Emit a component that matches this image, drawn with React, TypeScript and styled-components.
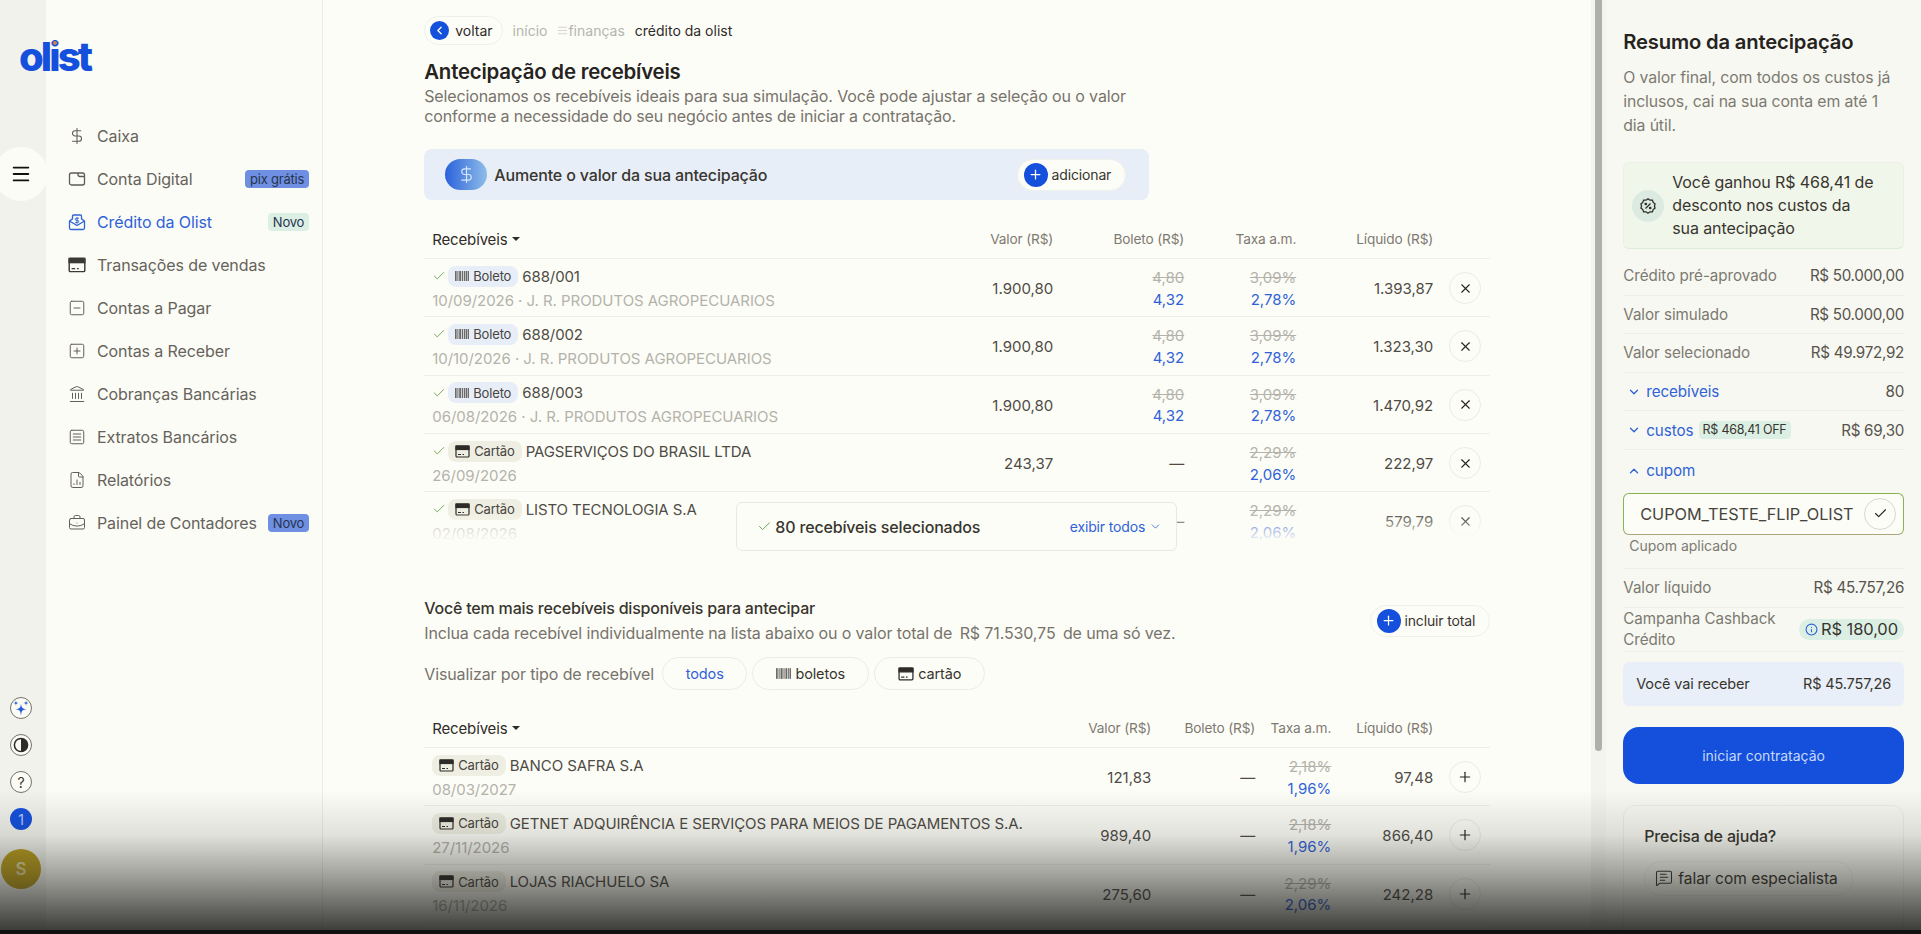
import { ReactNode } from 'react';
import styled, { createGlobalStyle } from 'styled-components';
import {
  AlignJustify, BriefcaseBusiness, Check, ChevronDown, ChevronLeft, ChevronUp, DollarSign,
  FileChartColumn, Info, Landmark, Menu, MessageSquareText, Plus, SquareMenu, SquareMinus, SquarePlus, X,
} from 'lucide-react';

const GlobalStyle = createGlobalStyle`
  html, body { margin: 0; height: 100%; overflow: hidden; background: #fdfdf7; }
  body { font-family: Inter, "Open Sans", "Liberation Sans", sans-serif; color: #3d3a36; }
  * { box-sizing: border-box; }
`;

const Page = styled.div`
  position: relative;
  display: flex;
  width: 1921px;
  height: 934px;
  overflow: hidden;
`;

const BottomShade = styled.div`
  position: absolute;
  left: 0;
  right: 0;
  bottom: 0;
  height: 144px;
  z-index: 20;
  pointer-events: none;
  border-bottom: 4px solid #111;
  background: linear-gradient(to bottom, rgba(0,0,0,0) 0%, rgba(30,30,26,.12) 32%, rgba(30,30,26,.42) 62%, rgba(20,20,18,.82) 100%);
`;

/* left rail */
const Rail = styled.aside`
  position: relative;
  z-index: 3;
  flex: 0 0 46px;
  min-width: 0;
  display: flex;
  flex-direction: column;
  align-items: center;
  padding: 33px 0 45px;
  background: #f2f2ec;
`;

const Logo = styled.div`
  align-self: flex-start;
  margin-left: 19px;
  height: 48px;
  font-size: 40px;
  line-height: 48px;
  font-weight: 800;
  letter-spacing: -2.9px;
  color: #1550dc;
  white-space: nowrap;
`;

const LogoI = styled.span`
  position: relative;
  &::after {
    content: '';
    position: absolute;
    top: 9px;
    left: 4px;
    width: 4px;
    height: 4px;
    border-radius: 50%;
    background: #d9803f;
  }
`;

const MenuCircle = styled.div`
  flex: none;
  align-self: flex-start;
  width: 54px;
  height: 54px;
  margin: 66px 0 0 -6px;
  border-radius: 50%;
  background: #fcfcf6;
  display: flex;
  align-items: center;
  justify-content: center;
  color: #111;
`;

const RailIcons = styled.div`
  margin-top: auto;
  padding-right: 4px;
  display: flex;
  flex-direction: column;
  align-items: center;
  gap: 15px;
`;

const RailRound = styled.div<{ $fill?: string }>`
  width: 22px;
  height: 22px;
  border-radius: 50%;
  border: ${p => (p.$fill ? '0' : '1px solid #77736c')};
  background: ${p => p.$fill || '#fcfcf6'};
  color: ${p => (p.$fill ? '#b9cdf8' : '#38352f')};
  font-size: 14px;
  display: flex;
  align-items: center;
  justify-content: center;
`;

const Avatar = styled.div`
  flex: none;
  width: 40px;
  height: 40px;
  margin-top: 4px;
  border-radius: 50%;
  background: #b89d1e;
  color: #dcd49a;
  font-size: 17px;
  font-weight: 600;
  display: flex;
  align-items: center;
  justify-content: center;
`;

/* sidebar */
const Sidebar = styled.nav`
  flex: 0 0 276px;
  padding: 114px 13px 0 22px;
  background: #fcfcf6;
  border-right: 1px solid #ecece6;
`;

const NavItem = styled.div<{ $active?: boolean }>`
  display: flex;
  align-items: center;
  height: 43.1px;
  gap: 11px;
  font-size: 16px;
  letter-spacing: -0.1px;
  white-space: nowrap;
  color: ${p => (p.$active ? '#2f62d8' : '#66635c')};
  svg { flex: none; color: ${p => (p.$active ? '#2f62d8' : '#5f5b54')}; }
`;

const NavBadge = styled.span<{ $tone: 'blue' | 'green' }>`
  margin-left: auto;
  padding: 0 5px;
  height: 18px;
  line-height: 18px;
  border-radius: 4px;
  font-size: 13px;
  letter-spacing: -0.2px;
  color: #27354f;
  background: ${p => (p.$tone === 'blue' ? '#6e8fe2' : '#dcefe4')};
`;

/* main column */
const Main = styled.main`
  flex: 0 0 1268px;
  padding: 16px 101px 0 101px;
  background: #fdfdf7;
`;

const Crumbs = styled.div`
  display: flex;
  align-items: center;
  height: 29px;
  font-size: 14px;
  color: #b5b5ae;
`;

const BackPill = styled.div`
  display: flex;
  align-items: center;
  gap: 6px;
  height: 29px;
  padding: 0 9px 0 5px;
  margin-right: 10px;
  border: 1px solid #f0f0ea;
  border-radius: 15px;
  color: #2e2b28;
`;

const Dot = styled.span<{ $size: number }>`
  flex: none;
  width: ${p => p.$size}px;
  height: ${p => p.$size}px;
  border-radius: 50%;
  background: #1550dc;
  color: #fff;
  display: flex;
  align-items: center;
  justify-content: center;
`;

const Crumb = styled.span<{ $current?: boolean }>`
  display: flex;
  align-items: center;
  margin-right: 10px;
  color: ${p => (p.$current ? '#2e2b28' : '#b5b5ae')};
`;

const Title = styled.h1`
  margin: 13px 0 1px;
  font-size: 20.4px;
  line-height: 28px;
  font-weight: 600;
  letter-spacing: -0.2px;
  color: #26231f;
`;

const Lead = styled.p`
  margin: 0;
  width: 720px;
  font-size: 16px;
  line-height: 19.5px;
  letter-spacing: -0.12px;
  color: #77736c;
`;

const Banner = styled.div`
  display: flex;
  align-items: center;
  height: 51px;
  width: 725px;
  margin-top: 23px;
  padding: 0 23px 0 21px;
  border-radius: 8px;
  background: #e8eef8;
  font-size: 16px;
  font-weight: 500;
  letter-spacing: -0.15px;
  color: #38352f;
`;

const BannerCoin = styled.span`
  width: 42px;
  height: 31px;
  margin-right: 7px;
  border-radius: 16px;
  background: linear-gradient(90deg, #2a62dc, #8fbde8);
  color: #d8e6fb;
  display: flex;
  align-items: center;
  justify-content: center;
`;

const AddPill = styled.div`
  margin-left: auto;
  display: flex;
  align-items: center;
  gap: 4px;
  height: 32px;
  padding: 0 14px 0 6px;
  border: 1px solid #f1f1eb;
  border-radius: 16px;
  background: #fdfdf8;
  font-size: 14px;
  font-weight: 400;
  letter-spacing: -0.15px;
  color: #38352f;
`;

/* tables */
const ListFrame = styled.div`
  position: relative;
  margin-top: 20px;
`;

const ListClip = styled.div`
  position: relative;
  height: 322px;
  margin-bottom: -8px;
  overflow: hidden;
  &::after {
    content: '';
    position: absolute;
    left: 0;
    right: 0;
    bottom: 0;
    height: 30px;
    background: linear-gradient(to bottom, rgba(253,253,247,0), #fdfdf7 100%);
  }
`;

const FloatCard = styled.div`
  position: absolute;
  top: 282px;
  left: 312px;
  z-index: 2;
  width: 441px;
  height: 49px;
  display: flex;
  align-items: center;
  padding: 0 14px 0 20px;
  border: 1px solid #e9e9e3;
  border-radius: 6px;
  background: #fcfdf7;
  font-size: 16px;
  font-weight: 500;
  letter-spacing: -0.15px;
  color: #38352f;
  gap: 3px;
  svg { flex: none; }
`;

const ShowAll = styled.span`
  margin-left: auto;
  display: flex;
  align-items: center;
  gap: 4px;
  font-size: 14px;
  font-weight: 400;
  color: #2f62d8;
`;

const Grid = styled.div<{ $cols: string; $head?: boolean }>`
  display: grid;
  grid-template-columns: ${p => p.$cols};
  align-items: center;
  height: ${p => (p.$head ? '39px' : '58.3px')};
  padding-left: 8px;
  border-bottom: 1px solid #eeeee8;
  font-size: 15px;
  color: #4e4b45;
`;

const HeadCell = styled.div<{ $first?: boolean }>`
  justify-self: ${p => (p.$first ? 'start' : 'end')};
  white-space: nowrap;
  font-size: ${p => (p.$first ? '15px' : '13.7px')};
  color: ${p => (p.$first ? '#2e2b28' : '#7d7a72')};
  letter-spacing: -0.15px;
  display: flex;
  align-items: center;
  gap: 5px;
`;

const SortArrow = styled.i`
  width: 0;
  height: 0;
  border-left: 4px solid transparent;
  border-right: 4px solid transparent;
  border-top: 4px solid #2e2b28;
`;

const Who = styled.div`
  min-width: 0;
`;

const WhoTop = styled.div`
  display: flex;
  align-items: center;
  gap: 4px;
  height: 21px;
  margin-bottom: 5px;
  font-size: 15px;
  letter-spacing: -0.1px;
  color: #4e4b45;
  white-space: nowrap;
`;

const CheckMark = styled(Check)`
  flex: none;
  margin-right: -2px;
  color: #6fa34f;
`;

const Tag = styled.span<{ $kind: 'boleto' | 'cartao' }>`
  display: inline-flex;
  align-items: center;
  gap: 4px;
  height: 21px;
  padding: 0 7px;
  border-radius: 8px;
  font-size: 13px;
  letter-spacing: -0.15px;
  color: #47443e;
  background: ${p => (p.$kind === 'boleto' ? '#e8eef8' : '#eeeee2')};
`;

const WhoSub = styled.div`
  font-size: 15px;
  line-height: 18px;
  letter-spacing: -0.05px;
  color: #b3b3ab;
  white-space: nowrap;
`;

const Amount = styled.div`
  justify-self: end;
  padding-top: 2px;
  white-space: nowrap;
`;

const Rate = styled.div`
  justify-self: end;
  padding-top: 2px;
  text-align: right;
  line-height: 21.5px;
`;

const Old = styled.div`
  color: #b3b3ab;
  text-decoration: line-through;
`;

const New = styled.div`
  color: #2f62d8;
`;

const RoundAction = styled.div`
  justify-self: end;
  margin: 1px 9px 0 0;
  width: 32px;
  height: 32px;
  border: 1px solid #ecece6;
  border-radius: 50%;
  background: #fdfdf8;
  color: #26231f;
  display: flex;
  align-items: center;
  justify-content: center;
`;

const MoreHead = styled.div`
  display: flex;
  align-items: center;
  justify-content: space-between;
  margin-top: 63px;
`;

const MoreTitle = styled.div`
  font-size: 16px;
  line-height: 22px;
  font-weight: 500;
  letter-spacing: -0.2px;
  color: #38352f;
`;

const MoreLead = styled.div`
  margin-top: 3px;
  font-size: 16px;
  line-height: 22px;
  letter-spacing: -0.12px;
  color: #77736c;
`;

const MoreAmount = styled.span`
  margin: 0 3px;
`;

const FilterRow = styled.div`
  display: flex;
  align-items: center;
  gap: 5px;
  margin-top: 13px;
  font-size: 16px;
  letter-spacing: -0.12px;
  color: #77736c;
`;

const FilterLabel = styled.span`
  width: 233px;
`;

const FilterPill = styled.span<{ $active?: boolean; $w: number }>`
  display: flex;
  align-items: center;
  justify-content: center;
  gap: 4px;
  width: ${p => p.$w}px;
  height: 33px;
  border: 1px solid #ecece6;
  border-radius: 17px;
  font-size: 14.5px;
  color: ${p => (p.$active ? '#2f62d8' : '#38352f')};
`;

const TableGap = styled.div`
  height: 19px;
`;

/* summary column */
const Scrollbar = styled.div`
  flex: 0 0 15px;
  padding: 0 4px;
  background: #f4f4ee;
`;

const ScrollThumb = styled.div`
  width: 7px;
  height: 751px;
  border-radius: 0 0 4px 4px;
  background: #b0b0a8;
`;

const Summary = styled.aside`
  flex: 1;
  min-width: 0;
  padding: 28px 17px 0 17px;
  background: #f7f8f1;
`;

const SummaryTitle = styled.h2`
  margin: 0;
  font-size: 20.2px;
  line-height: 28px;
  font-weight: 600;
  letter-spacing: -0.15px;
  color: #26231f;
`;

const SummaryLead = styled.p`
  margin: 10px 0 0;
  padding-right: 8px;
  font-size: 15.8px;
  line-height: 24px;
  letter-spacing: -0.1px;
  color: #7d7a72;
`;

const Discount = styled.div`
  display: flex;
  align-items: center;
  gap: 8px;
  height: 87px;
  margin-top: 24px;
  padding: 0 8px;
  border: 1px solid #ecf0e4;
  border-bottom-color: #dcecd8;
  border-radius: 6px;
  background: #f1f6ea;
  font-size: 16px;
  line-height: 23px;
  letter-spacing: -0.1px;
  color: #38352f;
`;

const DiscountText = styled.span`
  width: 205px;
`;

const DiscountBadge = styled.span`
  flex: none;
  width: 32px;
  height: 32px;
  border-radius: 50%;
  background: #dcebe2;
  display: flex;
  align-items: center;
  justify-content: center;
`;

const SumRow = styled.div<{ $h?: number; $plain?: boolean }>`
  display: flex;
  align-items: center;
  justify-content: space-between;
  height: ${p => p.$h || 38.6}px;
  border-bottom: ${p => (p.$plain ? '0' : '1px solid #eeeee8')};
  font-size: 15.2px;
  letter-spacing: -0.05px;
  color: #7d7a72;
`;

const Rows = styled.div`
  margin-top: 8px;
`;

const SumValue = styled.span`
  color: #57544d;
  letter-spacing: -0.3px;
`;

const Toggle = styled.span`
  display: flex;
  align-items: center;
  gap: 5px;
  padding-left: 4px;
  color: #2f62d8;
  white-space: nowrap;
`;

const OffTag = styled.span`
  height: 18px;
  line-height: 18px;
  padding: 0 4px;
  margin-left: 0;
  border-radius: 4px;
  background: #dcefe4;
  font-size: 12.5px;
  letter-spacing: -0.25px;
  color: #38352f;
`;

const CouponBox = styled.div`
  display: flex;
  align-items: center;
  justify-content: space-between;
  height: 42px;
  margin-top: 1px;
  padding: 0 7px 0 16px;
  border: 1px solid #8ab34f;
  border-bottom-color: #a9a77c;
  border-radius: 6px;
  background: #fdfdf8;
  font-size: 16.3px;
  letter-spacing: -0.05px;
  white-space: nowrap;
  color: #47443e;
`;

const CouponCheck = styled.span`
  flex: none;
  width: 32px;
  height: 32px;
  border: 1px solid #d8d8d2;
  border-radius: 50%;
  display: flex;
  align-items: center;
  justify-content: center;
  color: #26231f;
`;

const CouponNote = styled.div`
  height: 34px;
  padding: 1px 0 0 6px;
  border-bottom: 1px solid #eeeee8;
  font-size: 14px;
  line-height: 20px;
  color: #7d7a72;
`;

const Cashback = styled.span`
  display: flex;
  align-items: center;
  gap: 3px;
  height: 21px;
  padding: 0 6px;
  border-radius: 11px;
  background: #dcefe4;
  font-size: 16.5px;
  letter-spacing: -0.1px;
  color: #38352f;
  white-space: nowrap;
`;

const CampaignLabel = styled.span`
  width: 170px;
  line-height: 21px;
`;

const Receive = styled.div`
  display: flex;
  align-items: center;
  justify-content: space-between;
  height: 44px;
  margin-top: 10px;
  padding: 0 13px;
  border-radius: 6px;
  background: #e9eff8;
  font-size: 14.5px;
  letter-spacing: -0.15px;
  color: #38352f;
`;

const StartButton = styled.div`
  display: flex;
  align-items: center;
  justify-content: center;
  height: 57px;
  margin-top: 21px;
  border-radius: 16px;
  background: #1450dc;
  color: #c7d8f8;
  font-size: 14px;
`;

const Help = styled.div`
  height: 140px;
  margin-top: 21px;
  padding: 20px 20px;
  border: 1px solid #ecece6;
  border-radius: 12px;
`;

const HelpTitle = styled.div`
  font-size: 16px;
  line-height: 20px;
  font-weight: 500;
  letter-spacing: -0.15px;
  color: #38352f;
`;

const HelpPill = styled.div`
  display: inline-flex;
  align-items: center;
  gap: 5px;
  height: 35px;
  margin-top: 15px;
  padding: 0 14px 0 10px;
  border: 1px solid #ecece6;
  border-radius: 18px;
  font-size: 15.5px;
  letter-spacing: 0;
  color: #38352f;
  white-space: nowrap;
`;

const WalletIcon = () => (
  <svg width="18" height="18" viewBox="0 0 18 18" fill="none" stroke="currentColor" strokeWidth="1.3">
    <rect x="1.5" y="3" width="15" height="12" rx="2" />
    <path d="M10 3 v1.5 a2 2 0 0 0 2 2 h4.5" />
  </svg>
);

const CreditIcon = () => (
  <svg width="18" height="18" viewBox="0 0 18 18" fill="none" stroke="currentColor" strokeWidth="1.3">
    <path d="M1.5 8 L4.5 5.8 V3 a1 1 0 0 1 1-1 h7 a1 1 0 0 1 1 1 v2.8 L16.5 8 v7 a1.5 1.5 0 0 1-1.5 1.5 H3 A1.5 1.5 0 0 1 1.5 15 Z" />
    <path d="M1.5 8 L9 12.5 L16.5 8" />
    <path d="M10.8 5.2 H8.4 a1 1 0 0 0 0 2.2 h1.2 a1 1 0 0 1 0 2.2 H7.2 M9 4.2 v6.4" strokeWidth="1" />
  </svg>
);

const BarcodeIcon = ({ size = 14 }: { size?: number }) => (
  <svg width={size} height={size} viewBox="0 0 14 14" fill="#6b6a66">
    <rect x="0" y="2" width="1.6" height="10" />
    <rect x="2.4" y="2" width="1" height="10" />
    <rect x="4.2" y="2" width="2" height="10" />
    <rect x="7" y="2" width="1" height="10" />
    <rect x="8.8" y="2" width="1.6" height="10" />
    <rect x="11" y="2" width="1" height="10" />
    <rect x="12.6" y="2" width="1.4" height="10" />
  </svg>
);

const CardIcon = ({ size = 15, color = '#2e2b28' }: { size?: number; color?: string }) => (
  <svg width={size} height={size} viewBox="0 0 15 15" fill="none" stroke={color} strokeWidth="1.2">
    <rect x="1" y="2" width="13" height="11" rx="1" />
    <rect x="1" y="2" width="13" height="3.5" fill={color} />
    <path d="M3 10.5 h3 M7.5 10.5 h1.5" />
  </svg>
);

const SparkIcon = () => (
  <svg width="18" height="18" viewBox="0 0 16 16" fill="#2a5bd7">
    <path d="M8 4 C8.5 8 9 8.5 13 9 C9 9.5 8.5 10 8 15 C7.5 10 7 9.5 3 9 C7 8.5 7.5 8 8 4 Z" />
    <path d="M3.5 1 C3.7 3 4 3.3 6 3.5 C4 3.7 3.7 4 3.5 6 C3.3 4 3 3.7 1 3.5 C3 3.3 3.3 3 3.5 1 Z" />
    <path d="M12.5 1 C12.7 3 13 3.3 15 3.5 C13 3.7 12.7 4 12.5 6 C12.3 4 12 3.7 10 3.5 C12 3.3 12.3 3 12.5 1 Z" />
  </svg>
);

const ContrastIcon = () => (
  <svg width="16" height="16" viewBox="0 0 16 16">
    <circle cx="8" cy="8" r="6.6" fill="none" stroke="#2e2b28" strokeWidth="1.5" />
    <path d="M8 1.4 a6.6 6.6 0 0 1 0 13.2 Z" fill="#2e2b28" />
  </svg>
);

const PercentBadgeIcon = () => (
  <svg width="18" height="18" viewBox="0 0 18 18" fill="none" stroke="#2e2b28" strokeWidth="1.3">
    <path d="M9 1.8 l2 1.4 2.4-.1 .8 2.3 1.9 1.5 -.7 2.1 .7 2.1 -1.9 1.5 -.8 2.3 -2.4-.1 -2 1.4 -2-1.4 -2.4 .1 -.8-2.3 -1.9-1.5 .7-2.1 -.7-2.1 1.9-1.5 .8-2.3 2.4 .1 Z" />
    <path d="M6.5 11.5 l5-5" />
    <circle cx="6.8" cy="7" r=".7" />
    <circle cx="11.2" cy="11" r=".7" />
  </svg>
);

const navItems: { label: string; icon: ReactNode; badge?: string; tone?: 'blue' | 'green'; active?: boolean }[] = [
  { label: 'Caixa', icon: <DollarSign size={18} strokeWidth={1.4} /> },
  { label: 'Conta Digital', icon: <WalletIcon />, badge: 'pix grátis', tone: 'blue' },
  { label: 'Crédito da Olist', icon: <CreditIcon />, badge: 'Novo', tone: 'green', active: true },
  { label: 'Transações de vendas', icon: <CardIcon size={18} color="#3d3a36" /> },
  { label: 'Contas a Pagar', icon: <SquareMinus size={18} strokeWidth={1.3} /> },
  { label: 'Contas a Receber', icon: <SquarePlus size={18} strokeWidth={1.3} /> },
  { label: 'Cobranças Bancárias', icon: <Landmark size={18} strokeWidth={1.3} /> },
  { label: 'Extratos Bancários', icon: <SquareMenu size={18} strokeWidth={1.3} /> },
  { label: 'Relatórios', icon: <FileChartColumn size={18} strokeWidth={1.3} /> },
  { label: 'Painel de Contadores', icon: <BriefcaseBusiness size={18} strokeWidth={1.3} />, badge: 'Novo', tone: 'blue' },
];

type Row = {
  kind: 'boleto' | 'cartao';
  name: string;
  sub: string;
  value: string;
  fee?: [string, string];
  rate: [string, string];
  net: string;
};

const selected: Row[] = [
  { kind: 'boleto', name: '688/001', sub: '10/09/2026 · J. R. PRODUTOS AGROPECUARIOS', value: '1.900,80', fee: ['4,80', '4,32'], rate: ['3,09%', '2,78%'], net: '1.393,87' },
  { kind: 'boleto', name: '688/002', sub: '10/10/2026 · J. R. PRODUTOS AGROPECUARIOS', value: '1.900,80', fee: ['4,80', '4,32'], rate: ['3,09%', '2,78%'], net: '1.323,30' },
  { kind: 'boleto', name: '688/003', sub: '06/08/2026 · J. R. PRODUTOS AGROPECUARIOS', value: '1.900,80', fee: ['4,80', '4,32'], rate: ['3,09%', '2,78%'], net: '1.470,92' },
  { kind: 'cartao', name: 'PAGSERVIÇOS DO BRASIL LTDA', sub: '26/09/2026', value: '243,37', rate: ['2,29%', '2,06%'], net: '222,97' },
  { kind: 'cartao', name: 'LISTO TECNOLOGIA S.A', sub: '02/08/2026', value: '579,79', rate: ['2,29%', '2,06%'], net: '579,79' },
];

const available: Row[] = [
  { kind: 'cartao', name: 'BANCO SAFRA S.A', sub: '08/03/2027', value: '121,83', rate: ['2,18%', '1,96%'], net: '97,48' },
  { kind: 'cartao', name: 'GETNET ADQUIRÊNCIA E SERVIÇOS PARA MEIOS DE PAGAMENTOS S.A.', sub: '27/11/2026', value: '989,40', rate: ['2,18%', '1,96%'], net: '866,40' },
  { kind: 'cartao', name: 'LOJAS RIACHUELO SA', sub: '16/11/2026', value: '275,60', rate: ['2,29%', '2,06%'], net: '242,28' },
];

const selectedCols = '521px 100px 131px 112px 137px 57px';
const availableCols = '619px 100px 104px 76px 102px 57px';

const ReceivableTable = ({ rows, cols, added }: { rows: Row[]; cols: string; added?: boolean }) => (
  <>
    <Grid $cols={cols} $head>
      <HeadCell $first>Recebíveis <SortArrow /></HeadCell>
      <HeadCell>Valor (R$)</HeadCell>
      <HeadCell>Boleto (R$)</HeadCell>
      <HeadCell>Taxa a.m.</HeadCell>
      <HeadCell>Líquido (R$)</HeadCell>
    </Grid>
    {rows.map(row => (
      <Grid $cols={cols} key={row.name}>
        <Who>
          <WhoTop>
            {added && <CheckMark size={14} strokeWidth={1.6} />}
            <Tag $kind={row.kind}>
              {row.kind === 'boleto' ? <BarcodeIcon /> : <CardIcon />}
              {row.kind === 'boleto' ? 'Boleto' : 'Cartão'}
            </Tag>
            {row.name}
          </WhoTop>
          <WhoSub>{row.sub}</WhoSub>
        </Who>
        <Amount>{row.value}</Amount>
        {row.fee ? (
          <Rate><Old>{row.fee[0]}</Old><New>{row.fee[1]}</New></Rate>
        ) : (
          <Amount>—</Amount>
        )}
        <Rate><Old>{row.rate[0]}</Old><New>{row.rate[1]}</New></Rate>
        <Amount>{row.net}</Amount>
        <RoundAction>{added ? <X size={15} strokeWidth={1.8} /> : <Plus size={16} strokeWidth={1.8} />}</RoundAction>
      </Grid>
    ))}
  </>
);

export default function App() {
  return (
    <Page>
      <GlobalStyle />
      <Rail>
        <Logo>ol<LogoI>i</LogoI>st</Logo>
        <MenuCircle><Menu size={22} strokeWidth={2} /></MenuCircle>
        <RailIcons>
          <RailRound><SparkIcon /></RailRound>
          <RailRound><ContrastIcon /></RailRound>
          <RailRound>?</RailRound>
          <RailRound $fill="#1550dc">1</RailRound>
          <Avatar>S</Avatar>
        </RailIcons>
      </Rail>

      <Sidebar>
        {navItems.map(item => (
          <NavItem key={item.label} $active={item.active}>
            {item.icon}
            {item.label}
            {item.badge && <NavBadge $tone={item.tone || 'green'}>{item.badge}</NavBadge>}
          </NavItem>
        ))}
      </Sidebar>

      <Main>
        <Crumbs>
          <BackPill><Dot $size={19}><ChevronLeft size={13} strokeWidth={2.4} /></Dot>voltar</BackPill>
          <Crumb>início</Crumb>
          <Crumb><AlignJustify size={11} strokeWidth={1.2} />finanças</Crumb>
          <Crumb $current>crédito da olist</Crumb>
        </Crumbs>
        <Title>Antecipação de recebíveis</Title>
        <Lead>
          Selecionamos os recebíveis ideais para sua simulação. Você pode ajustar a seleção ou o valor
          conforme a necessidade do seu negócio antes de iniciar a contratação.
        </Lead>
        <Banner>
          <BannerCoin><DollarSign size={19} strokeWidth={1.5} /></BannerCoin>
          Aumente o valor da sua antecipação
          <AddPill><Dot $size={24}><Plus size={15} strokeWidth={2} /></Dot>adicionar</AddPill>
        </Banner>

        <ListFrame>
          <ListClip>
            <ReceivableTable rows={selected} cols={selectedCols} added />
          </ListClip>
          <FloatCard>
            <Check size={15} strokeWidth={1.6} color="#6fa34f" />
            80 recebíveis selecionados
            <ShowAll>exibir todos <ChevronDown size={13} strokeWidth={1.5} /></ShowAll>
          </FloatCard>
        </ListFrame>

        <MoreHead>
          <div>
            <MoreTitle>Você tem mais recebíveis disponíveis para antecipar</MoreTitle>
            <MoreLead>Inclua cada recebível individualmente na lista abaixo ou o valor total de <MoreAmount>R$ 71.530,75</MoreAmount> de uma só vez.</MoreLead>
          </div>
          <AddPill><Dot $size={24}><Plus size={15} strokeWidth={2} /></Dot>incluir total</AddPill>
        </MoreHead>
        <FilterRow>
          <FilterLabel>Visualizar por tipo de recebível</FilterLabel>
          <FilterPill $active $w={85}>todos</FilterPill>
          <FilterPill $w={117}><BarcodeIcon size={15} />boletos</FilterPill>
          <FilterPill $w={111}><CardIcon size={16} />cartão</FilterPill>
        </FilterRow>
        <TableGap />
        <ReceivableTable rows={available} cols={availableCols} />
      </Main>

      <Scrollbar><ScrollThumb /></Scrollbar>

      <Summary>
        <SummaryTitle>Resumo da antecipação</SummaryTitle>
        <SummaryLead>O valor final, com todos os custos já inclusos, cai na sua conta em até 1 dia útil.</SummaryLead>
        <Discount>
          <DiscountBadge><PercentBadgeIcon /></DiscountBadge>
          <DiscountText>Você ganhou R$ 468,41 de desconto nos custos da sua antecipação</DiscountText>
        </Discount>
        <Rows>
          <SumRow>Crédito pré-aprovado<SumValue>R$ 50.000,00</SumValue></SumRow>
          <SumRow>Valor simulado<SumValue>R$ 50.000,00</SumValue></SumRow>
          <SumRow>Valor selecionado<SumValue>R$ 49.972,92</SumValue></SumRow>
          <SumRow><Toggle><ChevronDown size={14} strokeWidth={2.2} />recebíveis</Toggle><SumValue>80</SumValue></SumRow>
          <SumRow><Toggle><ChevronDown size={14} strokeWidth={2.2} />custos<OffTag>R$ 468,41 OFF</OffTag></Toggle><SumValue>R$ 69,30</SumValue></SumRow>
          <SumRow $h={42} $plain><Toggle><ChevronUp size={14} strokeWidth={2.2} />cupom</Toggle></SumRow>
          <CouponBox>CUPOM_TESTE_FLIP_OLIST<CouponCheck><Check size={15} strokeWidth={1.8} /></CouponCheck></CouponBox>
          <CouponNote>Cupom aplicado</CouponNote>
          <SumRow $h={39}>Valor líquido<SumValue>R$ 45.757,26</SumValue></SumRow>
          <SumRow $h={44}>
            <CampaignLabel>Campanha Cashback Crédito</CampaignLabel>
            <Cashback><Info size={13} color="#2f62d8" />R$ 180,00</Cashback>
          </SumRow>
        </Rows>
        <Receive>Você vai receber<span>R$ 45.757,26</span></Receive>
        <StartButton>iniciar contratação</StartButton>
        <Help>
          <HelpTitle>Precisa de ajuda?</HelpTitle>
          <HelpPill><MessageSquareText size={18} strokeWidth={1.4} />falar com especialista</HelpPill>
        </Help>
      </Summary>
      <BottomShade />
    </Page>
  );
}
